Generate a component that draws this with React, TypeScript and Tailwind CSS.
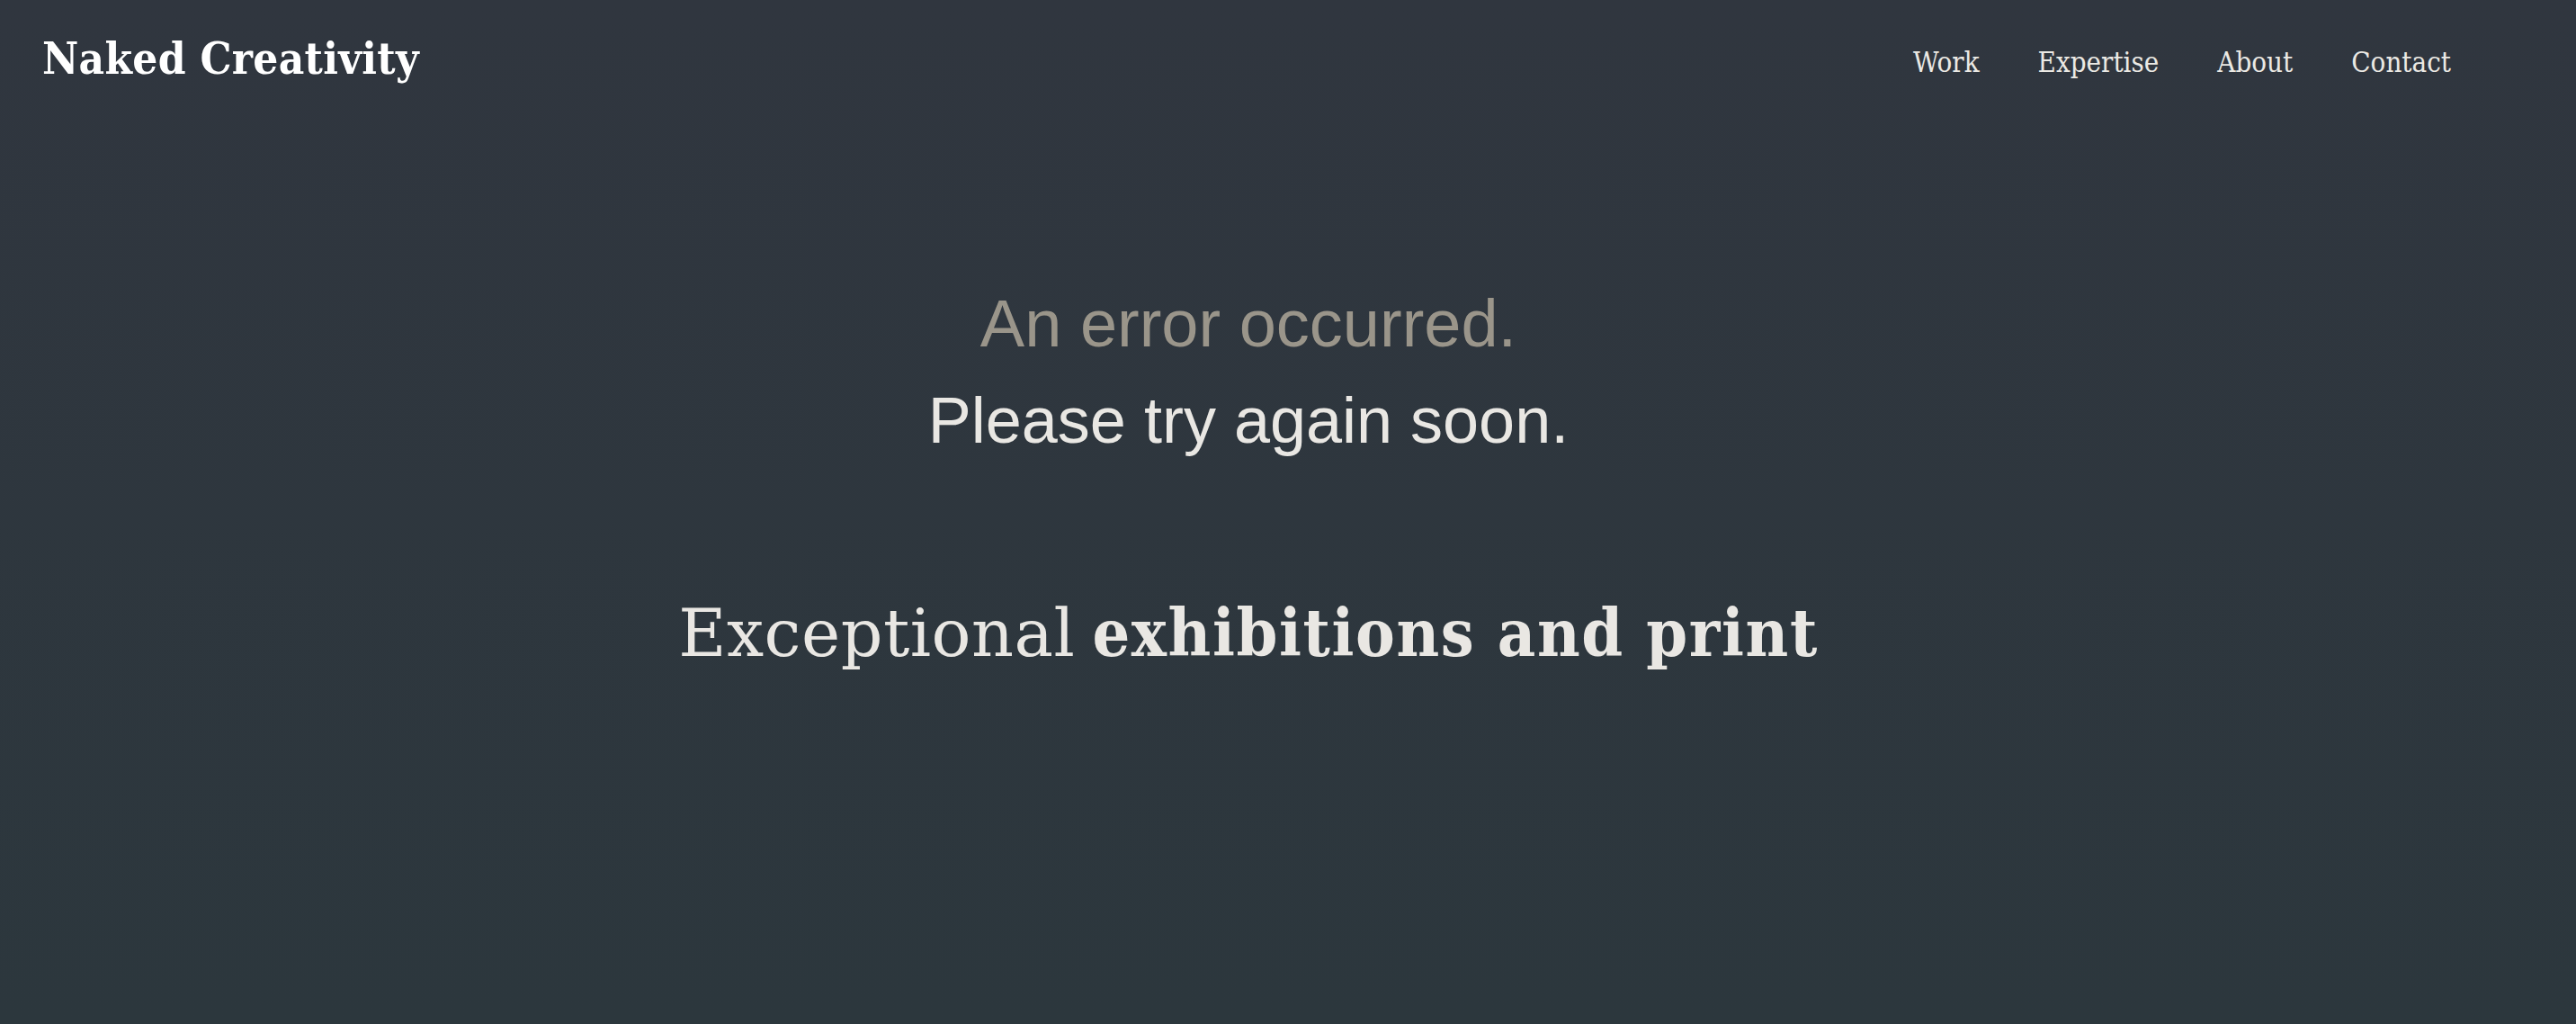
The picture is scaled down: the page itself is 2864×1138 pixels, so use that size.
export default function App() {
  return (
    <div className="min-h-screen w-full bg-gradient-to-b from-[#30363f] to-[#2c373d] flex flex-col">
      <header className="flex items-start justify-between pl-[47px] pr-[139px] pt-[41px] font-['DejaVu_Serif_Condensed','DejaVu_Serif',serif]">
        <div className="text-[49px] leading-none font-bold tracking-[0.3px] text-white">
          Naked Creativity
        </div>
        <nav className="mt-[13px] flex gap-[65px] text-[31px] leading-none text-[#ebe9e4]">
          <a>Work</a>
          <a>Expertise</a>
          <a>About</a>
          <a>Contact</a>
        </nav>
      </header>
      <main className="flex flex-col items-center pr-[88px] pt-[233px]">
        <p className="text-[74px] leading-none text-[#9a958a] font-['Liberation_Sans',Arial,sans-serif]">
          An error occurred.
        </p>
        <p className="mt-[34px] text-[72px] leading-none text-[#e9e7e3] font-['Liberation_Sans',Arial,sans-serif]">
          Please try again soon.
        </p>
        <h1 className="mt-[161px] text-[73px] leading-none text-[#e9e7e3]">
          <span className="font-normal tracking-[0.5px] font-['DejaVu_Serif',serif]">Exceptional</span>{" "}
          <span className="font-bold tracking-[1.6px] font-['DejaVu_Serif_Condensed','DejaVu_Serif',serif]">
            exhibitions and print
          </span>
        </h1>
      </main>
    </div>
  );
}
